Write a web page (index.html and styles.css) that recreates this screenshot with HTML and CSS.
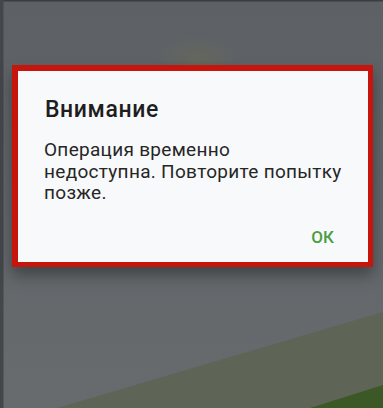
FILE: index.html
```html
<!DOCTYPE html>
<html lang="ru">
<head>
<meta charset="utf-8">
<link rel="stylesheet" href="styles.css">
</head>
<body>
<svg class="backdrop" width="383" height="408" viewBox="0 0 383 408" aria-hidden="true">
  <defs>
    <radialGradient id="glow" cx="0.5" cy="0.5" r="0.5">
      <stop offset="0" stop-color="#6c6f4c" stop-opacity="0.4"/>
      <stop offset="1" stop-color="#6c6f4c" stop-opacity="0"/>
    </radialGradient>
    <linearGradient id="fade" x1="0" y1="0" x2="0" y2="1">
      <stop offset="0" stop-color="#5d6165"/>
      <stop offset="0.55" stop-color="#62666a"/>
      <stop offset="1" stop-color="#686b6e"/>
    </linearGradient>
  </defs>
  <rect x="0" y="0" width="383" height="408" fill="url(#fade)"/>
  <ellipse cx="197" cy="60" rx="40" ry="24" fill="url(#glow)"/>
  <polygon points="57,408 383,312 383,408" fill="#5f6556"/>
  <polygon points="310,408 383,385 383,408" fill="#3c5826"/>
  <rect x="0" y="0" width="383" height="1.5" fill="#3b3e41"/>
  <rect x="0" y="0" width="3.5" height="408" fill="#44474a"/>
</svg>
<main class="screen">
  <section class="dialog">
    <h1 class="title">Внимание</h1>
    <p class="message">Операция временно<br>недоступна. Повторите попытку<br>позже.</p>
    <div class="actions">
      <span class="btn">ОК</span>
    </div>
  </section>
</main>
</body>
</html>
```
FILE: styles.css
```css
html, body {
  margin: 0;
  padding: 0;
}
body {
  width: 383px;
  height: 408px;
  overflow: hidden;
  position: relative;
  background: #62666a;
  font-family: Roboto, "Noto Sans", "Liberation Sans", sans-serif;
}
.backdrop {
  position: absolute;
  left: 0;
  top: 0;
  display: block;
}
.screen {
  position: relative;
  z-index: 1;
  padding: 65px 0 0 12px;
}
.dialog {
  box-sizing: border-box;
  width: 361px;
  height: 202px;
  border-style: solid;
  border-color: #c5150d;
  border-width: 6px 5px 5px 6px;
  background: #f8f9fb;
  padding: 24px 10px 0 27px;
  box-shadow: 0 8px 14px rgba(0, 0, 0, 0.35);
}
.title {
  margin: 0;
  font-size: 23px;
  line-height: 29px;
  font-weight: 500;
  letter-spacing: 0.6px;
  color: #1e1e1e;
}
.message {
  margin: 15px 0 0 -1px;
  font-size: 19px;
  line-height: 21.5px;
  letter-spacing: 0.3px;
  color: #262626;
  white-space: nowrap;
}
.actions {
  display: flex;
  justify-content: flex-end;
  margin-top: 23px;
  padding-right: 24px;
}
.btn {
  font-size: 17px;
  line-height: 20px;
  font-weight: 500;
  color: #4a9e44;
}
```
